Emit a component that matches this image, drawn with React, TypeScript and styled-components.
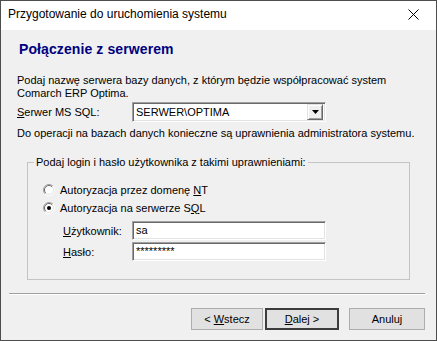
import React from "react";
import styled, { createGlobalStyle } from "styled-components";

const GlobalStyle = createGlobalStyle`
  html, body {
    margin: 0;
    padding: 0;
    background: #ffffff;
  }
  * {
    box-sizing: border-box;
  }
`;

const Window = styled.div`
  width: 437px;
  height: 341px;
  border: 1px solid #4d4d4d;
  background: #f0f0f0;
  display: flex;
  flex-direction: column;
  font-family: "Liberation Sans", Arial, sans-serif;
  font-size: 11px;
  color: #000;
`;

const TitleBar = styled.div`
  height: 29px;
  background: #fff;
  display: flex;
  justify-content: space-between;
  align-items: flex-start;
`;

const Title = styled.span`
  font-size: 12px;
  line-height: 14px;
  padding: 6px 0 0 7px;
`;

const CloseButton = styled.div`
  width: 46px;
  height: 29px;
  display: flex;
  align-items: center;
  justify-content: center;
  padding-bottom: 3px;
`;

const Body = styled.div`
  flex: 1;
  display: flex;
  flex-direction: column;
  padding: 11px 11px 0 16px;
`;

const Heading = styled.h1`
  margin: 0;
  padding-left: 2px;
  font-size: 14px;
  line-height: 17px;
  font-weight: bold;
  letter-spacing: 0.1px;
  color: #000080;
`;

const Text = styled.p<{ $top: number }>`
  margin: ${(p) => p.$top}px 0 0;
  line-height: 13px;
`;

const U = styled.span`
  text-decoration: underline;
`;

const ServerRow = styled.div`
  margin-top: 2px;
  display: grid;
  grid-template-columns: 115px 194px;
  align-items: center;
`;

const Sunken = styled.div`
  height: 20px;
  background: #fff;
  border: 1px solid;
  border-color: #a0a0a0 #fff #fff #a0a0a0;
  box-shadow: inset 1px 1px 0 #696969, inset -1px -1px 0 #e3e3e3;
  display: flex;
  align-items: center;
  padding-left: 3px;
  line-height: 13px;
`;

const Combo = styled(Sunken)`
  justify-content: space-between;
  padding-right: 2px;
`;

const DropButton = styled.div`
  width: 16px;
  height: 16px;
  background: #f0f0f0;
  border: 1px solid;
  border-color: #e3e3e3 #696969 #696969 #e3e3e3;
  box-shadow: inset 1px 1px 0 #fff, inset -1px -1px 0 #a0a0a0;
  display: flex;
  align-items: center;
  justify-content: center;
`;

const Group = styled.fieldset`
  margin: 16px 0 0 10px;
  width: 383px;
  border: 1px solid #c4c4c4;
  padding: 12px 0 18px 15px;
`;

const Legend = styled.legend`
  margin-left: -9px;
  padding: 0 2px;
  line-height: 13px;
`;

const RadioRow = styled.label`
  height: 18px;
  display: flex;
  align-items: center;
  gap: 5px;
  line-height: 13px;
`;

const FieldRow = styled.div<{ $top: number }>`
  margin-top: ${(p) => p.$top}px;
  padding-left: 20px;
  display: grid;
  grid-template-columns: 69px 194px;
  align-items: center;
`;

const Field = styled(Sunken)`
  height: 19px;
`;

const Separator = styled.div`
  margin: 13px 0 0 -8px;
  height: 2px;
  border-top: 1px solid #a0a0a0;
  border-bottom: 1px solid #fff;
`;

const Buttons = styled.div`
  margin-top: 13px;
  display: flex;
  justify-content: flex-end;
`;

const Button = styled.button<{ $width: number; $gap: number; $default?: boolean }>`
  width: ${(p) => p.$width}px;
  height: 22px;
  margin-left: ${(p) => p.$gap}px;
  padding: 0;
  background: #e1e1e1;
  border: ${(p) => (p.$default ? "2px solid #3c3c3c" : "1px solid #adadad")};
  font-family: "Liberation Sans", Arial, sans-serif;
  font-size: 11px;
  color: #000;
`;

const Radio = ({ checked }: { checked?: boolean }) => (
  <svg width="12" height="12" viewBox="0 0 12 12">
    <circle cx="6" cy="6" r="5" fill="#fff" />
    <path d="M2.1 9.9 A5.5 5.5 0 0 1 9.9 2.1" stroke="#a0a0a0" fill="none" />
    <path d="M9.9 2.1 A5.5 5.5 0 0 1 2.1 9.9" stroke="#fff" fill="none" />
    <path d="M2.8 9.2 A4.5 4.5 0 0 1 9.2 2.8" stroke="#696969" fill="none" />
    <path d="M9.2 2.8 A4.5 4.5 0 0 1 2.8 9.2" stroke="#e3e3e3" fill="none" />
    {checked && <circle cx="6" cy="6" r="2" fill="#000" />}
  </svg>
);

export default function App() {
  return (
    <>
      <GlobalStyle />
      <Window>
        <TitleBar>
          <Title>Przygotowanie do uruchomienia systemu</Title>
          <CloseButton>
            <svg width="11" height="11" viewBox="0 0 11 11">
              <path d="M0.5 0.5 L10.5 10.5 M10.5 0.5 L0.5 10.5" stroke="#000" strokeWidth="1" />
            </svg>
          </CloseButton>
        </TitleBar>
        <Body>
          <Heading>Połączenie z serwerem</Heading>
          <Text $top={16}>
            Podaj nazwę serwera bazy danych, z którym będzie współpracować system
            <br />
            Comarch ERP Optima.
          </Text>
          <ServerRow>
            <span>
              <U>S</U>erwer MS SQL:
            </span>
            <Combo>
              <span>SERWER\OPTIMA</span>
              <DropButton>
                <svg width="7" height="4" viewBox="0 0 7 4">
                  <polygon points="0,0 7,0 3.5,4" fill="#000" />
                </svg>
              </DropButton>
            </Combo>
          </ServerRow>
          <Text $top={5}>
            Do operacji na bazach danych konieczne są uprawnienia administratora systemu.
          </Text>
          <Group>
            <Legend>Podaj login i hasło użytkownika z takimi uprawnieniami:</Legend>
            <RadioRow>
              <Radio />
              <span>
                Autoryzacja przez domenę <U>N</U>T
              </span>
            </RadioRow>
            <RadioRow>
              <Radio checked />
              <span>
                Autoryzacja na serwerze S<U>Q</U>L
              </span>
            </RadioRow>
            <FieldRow $top={4}>
              <span>
                <U>U</U>żytkownik:
              </span>
              <Field>sa</Field>
            </FieldRow>
            <FieldRow $top={2}>
              <span>
                <U>H</U>asło:
              </span>
              <Field>*********</Field>
            </FieldRow>
          </Group>
          <Separator />
          <Buttons>
            <Button $width={72} $gap={0}>
              &lt; <U>W</U>stecz
            </Button>
            <Button $width={74} $gap={2} $default>
              <U>D</U>alej &gt;
            </Button>
            <Button $width={76} $gap={10}>
              Anuluj
            </Button>
          </Buttons>
        </Body>
      </Window>
    </>
  );
}
